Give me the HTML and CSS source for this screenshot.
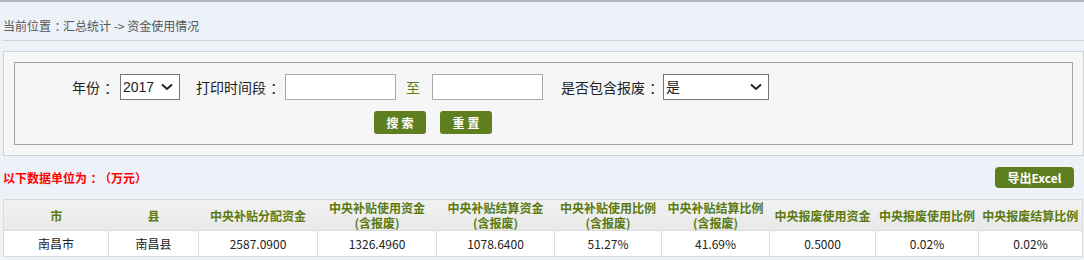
FILE: index.html
```html
<!DOCTYPE html>
<html lang="zh-CN">
<head>
    <meta charset="UTF-8">
    <title>资金使用情况</title>
    <link rel="stylesheet" href="styles.css">
</head>
<body>

<div class="crumb">当前位置<span class="colon">：</span>汇总统计 -&gt; 资金使用情况</div>

<div class="search-panel">
    <div class="search-box">
        <div class="search-row">
            <label class="lbl lbl-year">年份<span class="colon">：</span></label>
            <select class="sel sel-year">
                <option>2017</option>
            </select>
            <label class="lbl lbl-time">打印时间段<span class="colon">：</span></label>
            <input type="text" class="txt">
            <span class="to">至</span>
            <input type="text" class="txt">
            <label class="lbl lbl-scrap">是否包含报废<span class="colon">：</span></label>
            <select class="sel sel-scrap">
                <option>是</option>
            </select>
        </div>
        <div class="btn-row">
            <button class="btn">搜索</button>
            <button class="btn">重置</button>
        </div>
    </div>
</div>

<div class="toolbar">
    <span class="unit">以下数据单位为<span class="colon">：</span>（万元）</span>
    <button class="btn-export">导出Excel</button>
</div>

<table class="grid">
    <colgroup>
        <col class="c-city">
        <col class="c-county">
        <col class="c-wide">
        <col class="c-wide">
        <col class="c-wide2">
        <col class="c-mid">
        <col class="c-mid2">
        <col class="c-mid3">
        <col class="c-narrow">
        <col class="c-narrow2">
    </colgroup>
    <thead>
        <tr>
            <th>市</th>
            <th>县</th>
            <th>中央补贴分配资金</th>
            <th>中央补贴使用资金<br>(含报废)</th>
            <th>中央补贴结算资金<br>(含报废)</th>
            <th>中央补贴使用比例<br>(含报废)</th>
            <th>中央补贴结算比例<br>(含报废)</th>
            <th>中央报废使用资金</th>
            <th>中央报废使用比例</th>
            <th>中央报废结算比例</th>
        </tr>
    </thead>
    <tbody>
        <tr>
            <td>南昌市</td>
            <td>南昌县</td>
            <td>2587.0900</td>
            <td>1326.4960</td>
            <td>1078.6400</td>
            <td>51.27%</td>
            <td>41.69%</td>
            <td>0.5000</td>
            <td>0.02%</td>
            <td>0.02%</td>
        </tr>
    </tbody>
</table>

</body>
</html>
```

FILE: styles.css
```css
body {
    margin: 0;
    background: #edf2f9;
    border-top: 2px solid #adb5c1;
    font-family: "Noto Sans CJK SC", "Liberation Sans", sans-serif;
    font-size: 12px;
    color: #222;
    text-spacing-trim: space-all;
}
/* half-width colon glyph, padded back to a centred full cell */
.colon {
    font-feature-settings: "halt";
    padding: 0 0.2em 0 0.3em;
}
.crumb {
    margin-left: 3px;
    padding-top: 14px;
    height: 24px;
    line-height: 20px;
    color: #555;
    border-bottom: 1px solid #cdd0d4;
}
.search-panel {
    margin: 10px 0 0 3px;
    padding: 10px;
    background: #f6f6f6;
    border: 1px solid #cfd2d6;
}
.search-box {
    border: 1px solid #a2a2a2;
    padding: 11px 0 10px 0;
}
.search-row {
    display: flex;
    align-items: center;
    height: 26px;
    padding-left: 57px;
}
.lbl {
    font-size: 14px;
    color: #222;
}
.sel, .txt {
    box-sizing: border-box;
    height: 26px;
    background: #fff;
    font-family: "Liberation Sans", "Noto Sans CJK SC", sans-serif;
    font-size: 14px;
    color: #222;
    margin: 0;
}
.sel {
    appearance: none;
    -webkit-appearance: none;
    border: 1px solid #767676;
    border-radius: 0;
    padding: 0 0 0 2px;
    background-image: url("data:image/svg+xml;utf8,<svg xmlns='http://www.w3.org/2000/svg' width='12' height='8' viewBox='0 0 12 8'><path d='M1 1.5 L6 6 L11 1.5' fill='none' stroke='%23222' stroke-width='2'/></svg>");
    background-repeat: no-repeat;
    background-position: right 6px center;
}
.sel-year {
    width: 60px;
    margin-left: 6px;
}
.lbl-time {
    margin-left: 16px;
}
.txt {
    width: 111px;
    border: 1px solid #a9a9a9;
    margin-left: 5px;
}
.to {
    font-size: 14px;
    color: #5a7d16;
    margin: 0 12px 0 10px;
}
.to + .txt {
    margin-left: 0;
}
.lbl-scrap {
    margin-left: 18px;
}
.sel-scrap {
    width: 106px;
    margin-left: 4px;
}
.btn-row {
    display: flex;
    gap: 14px;
    margin-top: 11px;
    padding-left: 359px;
}
.btn {
    width: 52px;
    height: 23px;
    padding: 0 0 0 3px;
    border: none;
    border-radius: 3px;
    background: #5f7e1f;
    color: #fff;
    font-family: "Noto Sans CJK SC", sans-serif;
    font-size: 12px;
    font-weight: bold;
    letter-spacing: 3px;
}
.toolbar {
    display: flex;
    justify-content: space-between;
    align-items: center;
    margin: 11px 10px 0 3px;
    height: 21px;
}
.unit {
    color: #f00;
    font-weight: bold;
}
.btn-export {
    width: 79px;
    height: 21px;
    padding: 0;
    border: none;
    border-radius: 4px;
    background: #5f7e1f;
    color: #fff;
    font-family: "Noto Sans CJK SC", sans-serif;
    font-size: 12px;
    font-weight: bold;
}
.grid {
    margin: 11px 0 0 3px;
    width: 1079px;
    table-layout: fixed;
    border-collapse: collapse;
    border: 1px solid #d9d9d9;
}
.c-city { width: 105px; }
.c-county { width: 90px; }
.c-wide { width: 119px; }
.c-wide2 { width: 118px; }
.c-mid { width: 107px; }
.c-mid2 { width: 108px; }
.c-mid3 { width: 106px; }
.c-narrow { width: 103px; }
.c-narrow2 { width: 104px; }
.grid th {
    height: 30px;
    padding: 0;
    background: linear-gradient(#f2f2f2, #e8e8e8);
    color: #5b7a10;
    font-size: 12px;
    font-weight: bold;
    line-height: 15px;
    white-space: nowrap;
    overflow: hidden;
}
.grid td {
    height: 25px;
    padding: 0;
    background: #fff;
    border: 1px solid #dcdcdc;
    text-align: center;
    line-height: 16px;
}
```
